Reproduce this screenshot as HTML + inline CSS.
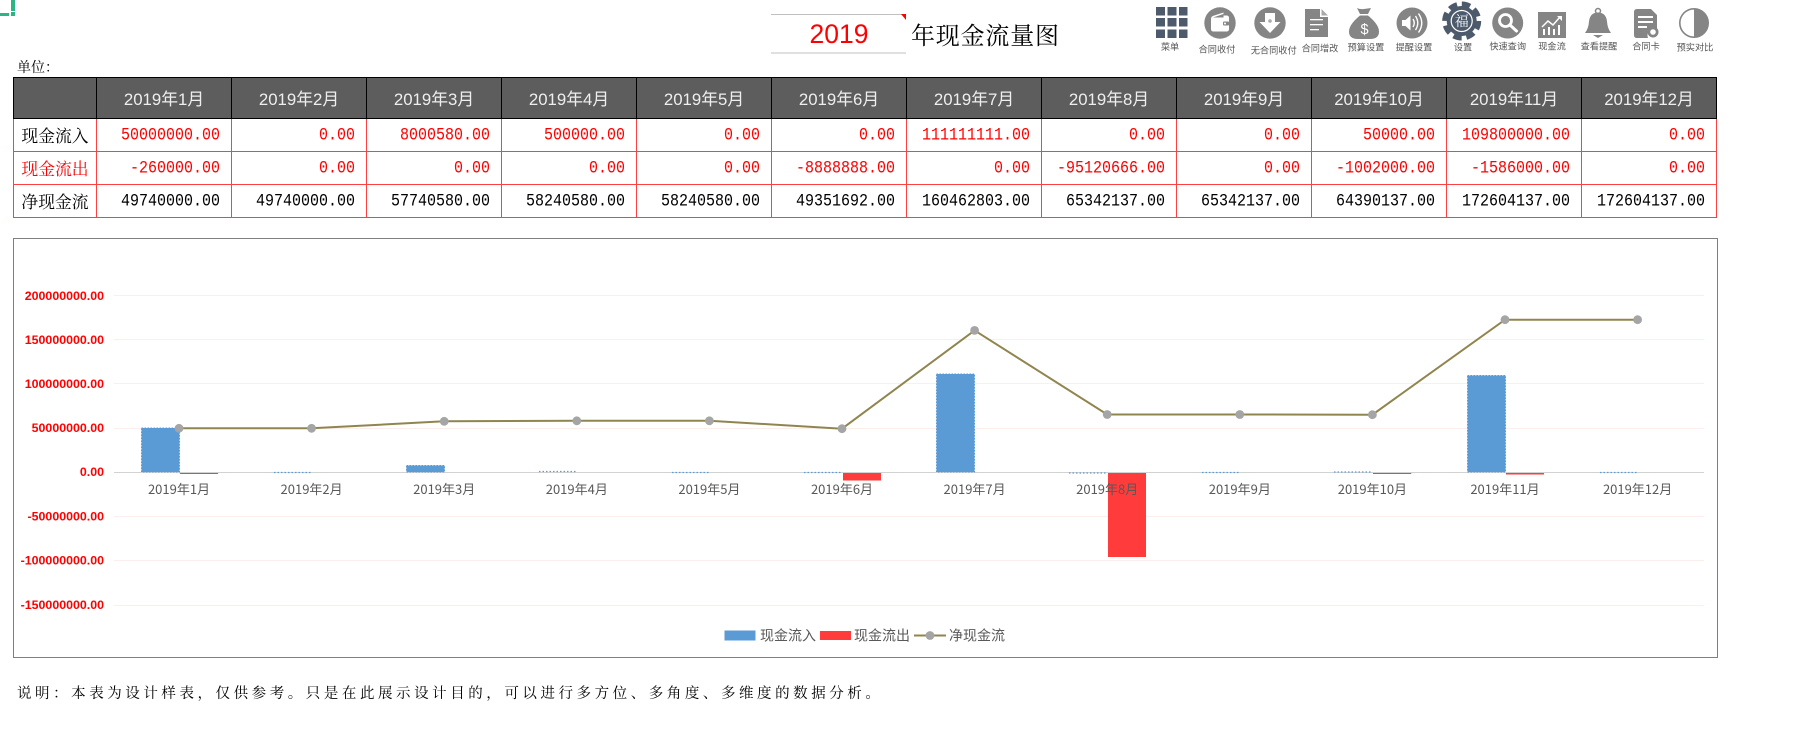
<!DOCTYPE html>
<html lang="zh"><head><meta charset="utf-8"><title>年现金流量图</title>
<style>
html,body{margin:0;padding:0;background:#fff;width:1801px;height:736px;overflow:hidden}
svg{position:absolute;left:0;top:0}
table{position:absolute;left:13px;top:77px;border-collapse:separate;border-spacing:0;table-layout:fixed;width:1704px}
th,td{box-sizing:border-box;padding:0;border-right:1px solid #ff4040;border-bottom:1px solid #ff4040}
th{height:42px;background:#5d5d5d;color:#eee;font:400 16.8px "Liberation Sans","Noto Sans CJK SC",sans-serif;border-color:#000;border-top:1px solid #000;text-align:center}
th:first-child{border-left:1px solid #000}
td{height:33px;text-align:right;padding-right:11px;font:15px "Liberation Mono",monospace;color:#000}
td span{display:inline-block;transform:scaleY(1.18)}
td:first-child{border-left:1px solid #ff4040;text-align:center;padding:0;font:16.8px "Noto Serif CJK SC","Liberation Serif",serif}
.r,tr .r{color:#f00}
</style></head><body>
<svg width="1801" height="736" viewBox="0 0 1801 736" font-family="'Liberation Sans','Noto Sans CJK SC',sans-serif">
<!-- green marker -->
<rect x="0" y="13" width="9" height="3" fill="#2bb585"/><rect x="11" y="0" width="4" height="11" fill="#2bb585"/><rect x="11" y="12" width="4" height="4" fill="#2bb585"/>
<!-- title -->
<line x1="771" y1="14.5" x2="906" y2="14.5" stroke="#c0c0c0"/><line x1="771" y1="53" x2="906" y2="53" stroke="#c0c0c0"/>
<polygon points="901,14 906,14 906,20" fill="#f00"/>
<text x="839" y="43" text-anchor="middle" font-size="26.500" fill="#f00">2019</text>
<text x="911" y="44" font-size="24" letter-spacing=".8" font-family="'Noto Serif CJK SC',serif" fill="#000">年现金流量图</text>
<text x="17" y="72" font-size="14" font-family="'Noto Serif CJK SC',serif" fill="#000">单位：</text>

<!-- toolbar -->
<g fill="#4d5a6b">
<rect x="1156" y="7" width="9" height="8.5"/><rect x="1167.5" y="7" width="9" height="8.5"/><rect x="1179" y="7" width="8.5" height="8.5"/>
<rect x="1156" y="18" width="9" height="8.5"/><rect x="1167.5" y="18" width="9" height="8.5"/><rect x="1179" y="18" width="8.5" height="8.5"/>
<rect x="1156" y="29.5" width="9" height="8.5"/><rect x="1167.5" y="29.5" width="9" height="8.5"/><rect x="1179" y="29.5" width="8.5" height="8.5"/>
</g>
<!-- wallet -->
<circle cx="1220" cy="23" r="15.7" fill="#858585"/>
<path d="M1211 19q0-2.500 2.500-3.200l10-3.300v3h3q2.500 0 2.500 2.500v11q0 2.500-2.500 2.500h-13q-2.500 0-2.500-2.500z" fill="#fff"/>
<path d="M1213 17.500l10.500-3.500v3.500z" fill="#858585"/>
<rect x="1223" y="21.500" width="6" height="4" rx="1" fill="#858585"/><circle cx="1225" cy="23.500" r="1" fill="#fff"/>
<!-- down arrow -->
<circle cx="1270" cy="23" r="15.700" fill="#858585"/>
<path d="M1265 13h10v9h5.500l-10.500 11-10.500-11h5.500z" fill="#fff"/><circle cx="1270" cy="21" r="1.800" fill="#aaa"/>
<!-- doc -->
<path d="M1305 9h15v8h8v20h-23z" fill="#858585"/><path d="M1321.500 9l6.500 6.500h-6.500z" fill="#a8a8a8"/>
<g fill="#fff"><rect x="1310" y="19" width="13" height="1.300"/><rect x="1310" y="24" width="13" height="1.300"/><rect x="1310" y="29" width="9" height="1.300"/></g>
<!-- money bag -->
<path d="M1357 8q3 1.500 7 1t7-1l-3 6h-8zM1360 15.500h8q11 9 11 16 0 7.500-9 7.500h-12q-9 0-9-7.500 0-7 11-16z" fill="#858585"/>
<text x="1364.500" y="34" text-anchor="middle" font-size="14.500" fill="#fff">$</text>
<!-- speaker -->
<circle cx="1412" cy="23" r="15.500" fill="#858585"/>
<path d="M1402 20h3.500l5-4.500v15l-5-4.500h-3.500z" fill="#fff"/>
<path d="M1413 19q2.500 4 0 8M1415.500 16q4.500 7 0 14M1418.500 13.500q6.500 9.500 0 19" fill="none" stroke="#fff" stroke-width="1.400"/>
<!-- gear -->
<circle cx="1461.700" cy="21" r="15" fill="#4d5a6b"/>
<circle cx="1461.700" cy="21" r="17" fill="none" stroke="#4d5a6b" stroke-width="5" stroke-dasharray="8.500 4.850"/>
<circle cx="1461.700" cy="21" r="10.500" fill="none" stroke="#fff" stroke-width="1.200"/>
<text x="1461.700" y="26" text-anchor="middle" font-size="14" fill="#fff" font-family="'Noto Serif CJK SC',serif">福</text>
<!-- search -->
<circle cx="1507.700" cy="23" r="15.500" fill="#858585"/>
<circle cx="1505.500" cy="20.500" r="6" fill="none" stroke="#fff" stroke-width="2.800"/>
<path d="M1510 25l6.500 6" stroke="#fff" stroke-width="3" stroke-linecap="round"/>
<!-- chart tile -->
<rect x="1538" y="12" width="28" height="26" fill="#858585"/>
<g fill="#fff"><rect x="1543" y="29" width="2" height="6"/><rect x="1548" y="27" width="2" height="8"/><rect x="1553" y="29" width="2" height="6"/><rect x="1558" y="25" width="2" height="10"/></g>
<path d="M1542 27l6-6 5 4 7-8" fill="none" stroke="#fff" stroke-width="1.500"/><path d="M1557 16h5v5z" fill="#fff"/>
<!-- bell -->
<circle cx="1598" cy="11" r="2.500" fill="none" stroke="#858585" stroke-width="1.500"/>
<path d="M1598 12.500q8 0 9 9 .5 7 4 11.500h-26q3.500-4.500 4-11.500 1-9 9-9z" fill="#858585"/><path d="M1593 35h10l-5 3z" fill="#858585"/>
<!-- card doc -->
<path d="M1637 9h14l6 6v14a7 7 0 0 0-9 9h-11q-3 0-3-3v-23q0-3 3-3z" fill="#858585"/>
<g fill="#fff"><rect x="1638" y="16" width="15" height="2"/><rect x="1638" y="21" width="15" height="2"/><rect x="1638" y="26" width="9" height="2"/></g>
<circle cx="1653" cy="32" r="5.500" fill="#858585"/><circle cx="1653" cy="32" r="2.800" fill="#fff"/>
<!-- half circle -->
<circle cx="1694" cy="23" r="14.200" fill="#fff" stroke="#858585" stroke-width="1.600"/>
<path d="M1694 8.800a14.200 14.200 0 0 1 0 28.400z" fill="#858585"/>
<g font-size="9.200" fill="#555" text-anchor="middle" font-family="'Noto Sans CJK SC',sans-serif">
<text x="1170" y="50">菜单</text><text x="1217" y="52.500">合同收付</text><text x="1273.700" y="53.500">无合同收付</text><text x="1320" y="51.500">合同增改</text><text x="1366" y="50.500">预算设置</text><text x="1414" y="50.500">提醒设置</text><text x="1463" y="50.500">设置</text><text x="1507.700" y="49.500">快速查询</text><text x="1552" y="49.500">现金流</text><text x="1599" y="49.500">查看提醒</text><text x="1646" y="49.500">合同卡</text><text x="1695" y="50.500">预实对比</text>
</g>

<!-- chart -->
<rect x="13.500" y="238.500" width="1704" height="419" fill="#fff" stroke="#808080"/>
<g stroke="#fdeeee" stroke-width="1">
<line x1="114" x2="1704" y1="295.500" y2="295.500"/><line x1="114" x2="1704" y1="339.500" y2="339.500"/><line x1="114" x2="1704" y1="383.500" y2="383.500"/><line x1="114" x2="1704" y1="428.500" y2="428.500"/><line x1="114" x2="1704" y1="516.500" y2="516.500"/><line x1="114" x2="1704" y1="560.500" y2="560.500"/><line x1="114" x2="1704" y1="605.500" y2="605.500"/>
</g>
<line x1="114" x2="1704" y1="472.500" y2="472.500" stroke="#d2d2d2"/>
<g fill="#5b9bd5" stroke="#5b9bd5" stroke-dasharray="1.500 1.500">
<rect x="141.500" y="428" width="38" height="44"/>
<rect x="406.500" y="465.500" width="38" height="6.500"/>
<rect x="936.500" y="374" width="38" height="98"/>
<rect x="1467.500" y="375.500" width="38" height="96.500"/>
</g>
<g stroke="#5b9bd5" stroke-dasharray="1.500 2" stroke-width="1.300">
<line x1="274" x2="312" y1="472.500" y2="472.500"/><line x1="539" x2="577" y1="471.500" y2="471.500"/><line x1="672" x2="710" y1="472.500" y2="472.500"/><line x1="804" x2="842" y1="472.500" y2="472.500"/><line x1="1069" x2="1107" y1="473" y2="473"/><line x1="1202" x2="1240" y1="472.500" y2="472.500"/><line x1="1334" x2="1372" y1="472" y2="472"/><line x1="1600" x2="1638" y1="472.500" y2="472.500"/>
</g>
<g fill="#ff3b3b">
<rect x="180" y="473" width="38" height="1"/>
<rect x="843" y="473" width="38" height="7.500"/>
<rect x="1108" y="473" width="38" height="84"/>
<rect x="1373" y="473" width="38" height="1"/>
<rect x="1506" y="473" width="38" height="1.500"/>
</g>
<polyline fill="none" stroke="#91854f" stroke-width="2" points="179,428.300 311.600,428.300 444.200,421.300 576.800,420.800 709.400,420.800 842,428.700 974.600,330.400 1107.200,414.500 1239.800,414.500 1372.400,414.700 1505,319.700 1637.600,319.700"/>
<g fill="#a5a5a5"><circle cx="179" cy="428.300" r="4.400"/><circle cx="311.600" cy="428.300" r="4.400"/><circle cx="444.200" cy="421.300" r="4.400"/><circle cx="576.800" cy="420.800" r="4.400"/><circle cx="709.400" cy="420.800" r="4.400"/><circle cx="842" cy="428.700" r="4.400"/><circle cx="974.600" cy="330.400" r="4.400"/><circle cx="1107.200" cy="414.500" r="4.400"/><circle cx="1239.800" cy="414.500" r="4.400"/><circle cx="1372.400" cy="414.700" r="4.400"/><circle cx="1505" cy="319.700" r="4.400"/><circle cx="1637.600" cy="319.700" r="4.400"/></g>
<g font-size="12.400" font-weight="700" fill="#f00" text-anchor="end">
<text x="104" y="300">200000000.00</text><text x="104" y="344">150000000.00</text><text x="104" y="388">100000000.00</text><text x="104" y="432">50000000.00</text><text x="104" y="476">0.00</text><text x="104" y="520.500">-50000000.00</text><text x="104" y="564.500">-100000000.00</text><text x="104" y="609">-150000000.00</text>
</g>
<g font-size="13" fill="#595959" text-anchor="middle" font-family="'Noto Sans CJK SC',sans-serif">
<text x="179" y="494">2019年1月</text><text x="311.600" y="494">2019年2月</text><text x="444.200" y="494">2019年3月</text><text x="576.800" y="494">2019年4月</text><text x="709.400" y="494">2019年5月</text><text x="842" y="494">2019年6月</text><text x="974.600" y="494">2019年7月</text><text x="1107.200" y="494">2019年8月</text><text x="1239.800" y="494">2019年9月</text><text x="1372.400" y="494">2019年10月</text><text x="1505" y="494">2019年11月</text><text x="1637.600" y="494">2019年12月</text>
</g>
<rect x="724.500" y="630.500" width="31" height="10" fill="#5b9bd5"/>
<rect x="820" y="631" width="31" height="9" fill="#ff3b3b"/>
<line x1="914" x2="946" y1="635.500" y2="635.500" stroke="#91854f" stroke-width="2"/><circle cx="930" cy="635.500" r="4.400" fill="#a5a5a5"/>
<g font-size="14" fill="#595959" font-family="'Noto Sans CJK SC',sans-serif"><text x="760" y="640.500">现金流入</text><text x="854" y="640.500">现金流出</text><text x="949" y="640.500">净现金流</text></g>
<text x="17" y="698" font-size="14.500" letter-spacing="3.550" fill="#000" font-family="'Noto Serif CJK SC',serif">说明：本表为设计样表，仅供参考。只是在此展示设计目的，可以进行多方位、多角度、多维度的数据分析。</text>
</svg>

<table>
<colgroup><col style="width:84px"><col span="12" style="width:135px"></colgroup>
<tr><th></th><th>2019年1月</th><th>2019年2月</th><th>2019年3月</th><th>2019年4月</th><th>2019年5月</th><th>2019年6月</th><th>2019年7月</th><th>2019年8月</th><th>2019年9月</th><th>2019年10月</th><th>2019年11月</th><th>2019年12月</th></tr>
<tr><td>现金流入</td><td class="r"><span>50000000.00</span></td><td class="r"><span>0.00</span></td><td class="r"><span>8000580.00</span></td><td class="r"><span>500000.00</span></td><td class="r"><span>0.00</span></td><td class="r"><span>0.00</span></td><td class="r"><span>111111111.00</span></td><td class="r"><span>0.00</span></td><td class="r"><span>0.00</span></td><td class="r"><span>50000.00</span></td><td class="r"><span>109800000.00</span></td><td class="r"><span>0.00</span></td></tr>
<tr><td class="r">现金流出</td><td class="r"><span>-260000.00</span></td><td class="r"><span>0.00</span></td><td class="r"><span>0.00</span></td><td class="r"><span>0.00</span></td><td class="r"><span>0.00</span></td><td class="r"><span>-8888888.00</span></td><td class="r"><span>0.00</span></td><td class="r"><span>-95120666.00</span></td><td class="r"><span>0.00</span></td><td class="r"><span>-1002000.00</span></td><td class="r"><span>-1586000.00</span></td><td class="r"><span>0.00</span></td></tr>
<tr><td>净现金流</td><td><span>49740000.00</span></td><td><span>49740000.00</span></td><td><span>57740580.00</span></td><td><span>58240580.00</span></td><td><span>58240580.00</span></td><td><span>49351692.00</span></td><td><span>160462803.00</span></td><td><span>65342137.00</span></td><td><span>65342137.00</span></td><td><span>64390137.00</span></td><td><span>172604137.00</span></td><td><span>172604137.00</span></td></tr>
</table>
</body></html>
